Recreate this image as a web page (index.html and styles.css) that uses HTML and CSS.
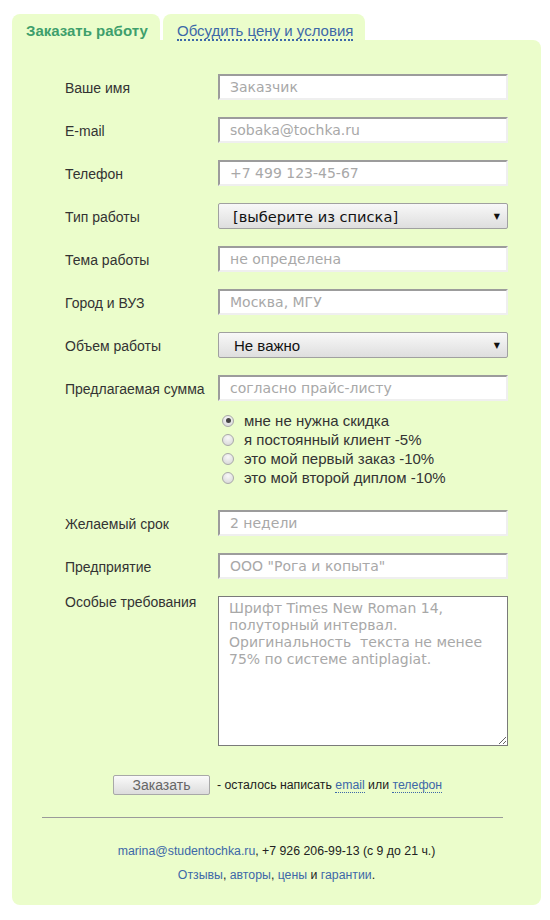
FILE: index.html
```html
<!DOCTYPE html>
<html lang="ru">
<head>
<meta charset="utf-8">
<title>Заказать работу</title>
<link rel="stylesheet" href="styles.css">
</head>
<body>
<div class="wrap">
  <div class="tabs">
    <div class="tab tab-active">Заказать работу</div>
    <div class="tab"><a class="dotted tab-link" href="#">Обсудить цену и условия</a></div>
  </div>
  <form class="panel">
    <div class="row"><label class="lbl">Ваше имя</label><input class="field" type="text" placeholder="Заказчик"></div>
    <div class="row"><label class="lbl">E-mail</label><input class="field" type="text" placeholder="sobaka@tochka.ru"></div>
    <div class="row"><label class="lbl">Телефон</label><input class="field" type="text" placeholder="+7 499 123-45-67"></div>
    <div class="row"><label class="lbl">Тип работы</label><div class="select sel-wide"><span>[выберите из списка]</span><span class="arrow">▼</span></div></div>
    <div class="row"><label class="lbl">Тема работы</label><input class="field" type="text" placeholder="не определена"></div>
    <div class="row"><label class="lbl">Город и ВУЗ</label><input class="field" type="text" placeholder="Москва, МГУ"></div>
    <div class="row"><label class="lbl">Объем работы</label><div class="select sel-plain"><span>Не важно</span><span class="arrow">▼</span></div></div>
    <div class="row"><label class="lbl">Предлагаемая сумма</label><input class="field" type="text" placeholder="согласно прайс-листу"></div>
    <div class="radios">
      <label class="radio"><span class="dot checked"></span>мне не нужна скидка</label>
      <label class="radio"><span class="dot"></span>я постоянный клиент -5%</label>
      <label class="radio"><span class="dot"></span>это мой первый заказ -10%</label>
      <label class="radio"><span class="dot"></span>это мой второй диплом -10%</label>
    </div>
    <div class="row"><label class="lbl">Желаемый срок</label><input class="field" type="text" placeholder="2 недели"></div>
    <div class="row"><label class="lbl">Предприятие</label><input class="field" type="text" placeholder="ООО &quot;Рога и копыта&quot;"></div>
    <div class="row row-top"><label class="lbl">Особые требования</label><textarea class="area" placeholder="Шрифт Times New Roman 14, полуторный интервал. Оригинальность  текста не менее 75% по системе antiplagiat."></textarea></div>
    <div class="submit-row">
      <button class="btn" type="button">Заказать</button>
      <span class="note">- осталось написать <a class="dotted" href="#">email</a> или <a class="dotted" href="#">телефон</a></span>
    </div>
    <hr class="sep">
    <div class="footer">
      <p><a href="#">marina@studentochka.ru</a>, +7 926 206-99-13 (с 9 до 21 ч.)</p>
      <p><a href="#">Отзывы</a>, <a href="#">авторы</a>, <a href="#">цены</a> и <a href="#">гарантии</a>.</p>
    </div>
  </form>
</div>
</body>
</html>
```

FILE: styles.css
```css
* { box-sizing: border-box; }
html, body { margin: 0; padding: 0; background: #fff; }
body { font-family: "Liberation Sans", Arial, sans-serif; color: #333; }

.wrap { padding: 14px 0 0 12px; width: 541px; }

.tabs { display: flex; gap: 3px; height: 26px; }
.tab {
  background: #ebfdcb;
  border-radius: 8px 8px 0 0;
  height: 26px;
  font-size: 15px;
  line-height: 26px;
  padding-top: 4px;
}
.tab-active {
  width: 148px;
  padding-left: 14px;
  font-weight: bold;
  color: #3e9f6c;
}
.tab:not(.tab-active) { width: 202px; padding-left: 14px; }
.tab-link { color: #3d68a8; }

a { color: #3d68a8; text-decoration: none; }
.dotted { border-bottom: 1px dotted #3d68a8; }
.tab-link.dotted { border-bottom-width: 2px; line-height: 17px; display: inline-block; }

.panel {
  display: block;
  background: #ebfdcb;
  width: 529px;
  border-radius: 0 8px 8px 8px;
  padding: 34px 0 18px 0;
}

.row {
  display: grid;
  grid-template-columns: 153px 290px;
  align-items: center;
  margin: 0 0 17px 53px;
}
.row-top { align-items: start; margin-bottom: 0; }
.lbl { font-size: 14px; color: #333; line-height: 16px; padding-top: 1px; }
.row-top .lbl { padding-top: 0; margin-top: -2px; }

.field {
  display: block;
  width: 290px;
  height: 26px;
  border: 2px solid;
  border-color: #9c9c9c #efefef #efefef #9c9c9c;
  background: #fff;
  padding: 0 10px;
  font-family: "DejaVu Sans", Verdana, sans-serif;
  font-size: 14px;
  color: #333;
  outline: none;
}
.field::placeholder { color: #a8a8a8; }

.select {
  display: flex;
  align-items: center;
  justify-content: space-between;
  width: 290px;
  height: 26px;
  border: 1px solid #a0a0a0;
  border-radius: 2px;
  background: linear-gradient(#f8f8f8, #dedede);
  padding: 0 7px 0 14px;
  color: #111;
}
.sel-wide { font-family: "DejaVu Sans", Verdana, sans-serif; font-size: 14.6px; }
.sel-plain { font-family: "Liberation Sans", Arial, sans-serif; font-size: 15px; padding-left: 15px; }
.arrow { font-size: 8px; color: #111; font-family: "DejaVu Sans", sans-serif; }

.radios {
  margin: -7px 0 23px 210px;
  display: flex;
  flex-direction: column;
}
.radio {
  display: flex;
  align-items: center;
  height: 19px;
  font-size: 15px;
  color: #333;
}
.dot {
  width: 12px;
  height: 12px;
  border-radius: 50%;
  border: 1px solid #a9a9a9;
  background: radial-gradient(circle at 50% 30%, #f8f8f8, #d4d4d4);
  margin-right: 10px;
  position: relative;
  flex: none;
}
.dot.checked::after {
  content: "";
  position: absolute;
  left: 2.5px;
  top: 2.5px;
  width: 5px;
  height: 5px;
  border-radius: 50%;
  background: #444;
}

.area {
  display: block;
  width: 290px;
  height: 150px;
  border: 1px solid #7a7a7a;
  background: #fff;
  padding: 3px 10px;
  font-family: "DejaVu Sans", Verdana, sans-serif;
  font-size: 14px;
  line-height: 17px;
  color: #333;
  resize: both;
  outline: none;
}
.area::placeholder { color: #a8a8a8; }

.submit-row {
  display: flex;
  align-items: center;
  margin: 29px 0 0 101px;
}
.btn {
  width: 97px;
  height: 20px;
  border: 1px solid #a8a8a8;
  border-radius: 2px;
  background: linear-gradient(#fafafa, #dcdcdc);
  font-family: "Liberation Sans", Arial, sans-serif;
  font-size: 14px;
  color: #666;
  padding: 0;
  margin-right: 7px;
}
.note { font-size: 12.3px; color: #222; }

.sep {
  border: 0;
  border-top: 1px solid #9a9a9a;
  margin: 22px 38px 0 30px;
  height: 0;
}

.footer { text-align: center; font-size: 12.3px; color: #222; padding-top: 21px; }
.footer p { margin: 0; line-height: 24px; }
```
